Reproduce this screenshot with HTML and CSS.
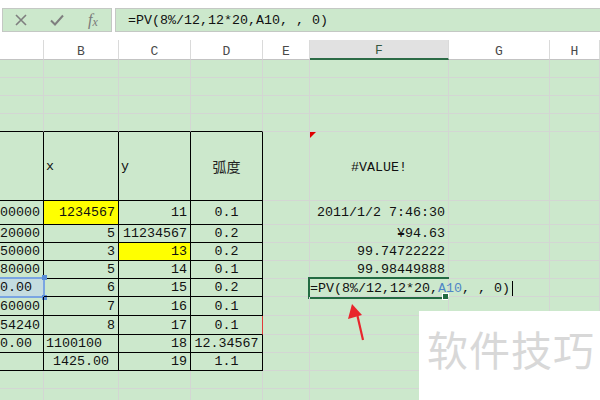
FILE: index.html
```html
<!DOCTYPE html>
<html>
<head>
<meta charset="utf-8">
<link rel="stylesheet" href="styles.css">
</head>
<body>
<div class="fbar">
  <div class="fbtns">
    <span class="ic"><svg width="12" height="12" viewBox="0 0 12 12"><path d="M1 1L11 11M11 1L1 11" stroke="#7f7f7f" stroke-width="1.6" fill="none"/></svg></span>
    <span class="ic"><svg width="14" height="12" viewBox="0 0 14 12"><path d="M1 6.5L5 10.5L13 1.5" stroke="#7f7f7f" stroke-width="2" fill="none"/></svg></span>
    <span class="ic fx"><i>f</i><i class="sx">x</i></span>
  </div>
  <div class="finput">=PV(8%/12,12*20,A10, , 0)</div>
</div>
<div class="sheet">
  <div class="h"></div><div class="h">B</div><div class="h">C</div><div class="h">D</div><div class="h">E</div><div class="h hs">F</div><div class="h">G</div><div class="h">H</div>

  <div class="c"></div><div class="c"></div><div class="c"></div><div class="c"></div><div class="c"></div><div class="c"></div><div class="c"></div><div class="c"></div>
  <div class="c"></div><div class="c"></div><div class="c"></div><div class="c"></div><div class="c"></div><div class="c"></div><div class="c"></div><div class="c"></div>
  <div class="c"></div><div class="c"></div><div class="c"></div><div class="c"></div><div class="c"></div><div class="c"></div><div class="c"></div><div class="c"></div>
  <div class="c tt"></div><div class="c tt"></div><div class="c tt"></div><div class="c tt"></div><div class="c"></div><div class="c"></div><div class="c"></div><div class="c"></div>

  <div class="c t"></div><div class="c t l">x</div><div class="c t l">y</div><div class="c t m cjk">弧度</div><div class="c"></div><div class="c m err">#VALUE!<span class="tri"></span></div><div class="c"></div><div class="c"></div>

  <div class="c t r">00000</div><div class="c t r y">1234567</div><div class="c t r">11</div><div class="c t m">0.1</div><div class="c"></div><div class="c r">2011/1/2 7:46:30</div><div class="c"></div><div class="c"></div>
  <div class="c t r">20000</div><div class="c t r">5</div><div class="c t r">11234567</div><div class="c t m">0.2</div><div class="c"></div><div class="c r">¥94.63</div><div class="c"></div><div class="c"></div>
  <div class="c t r">50000</div><div class="c t r">3</div><div class="c t r y">13</div><div class="c t m">0.2</div><div class="c"></div><div class="c r">99.74722222</div><div class="c"></div><div class="c"></div>
  <div class="c t r">80000</div><div class="c t r">5</div><div class="c t r">14</div><div class="c t m">0.1</div><div class="c"></div><div class="c r">99.98449888</div><div class="c"></div><div class="c"></div>
  <div class="c t r ref pz">0.00<span class="refbox"><span class="sq sq1"></span><span class="sq sq2"></span></span></div><div class="c t r">6</div><div class="c t r">15</div><div class="c t m">0.2</div><div class="c"></div><div class="c edit">=PV(8%/12,12*20,<span class="blue">A10</span>, , 0)<span class="caret"></span><span class="selbox"><span class="handle"></span></span></div><div class="c"></div><div class="c"></div>
  <div class="c t r">60000</div><div class="c t r">7</div><div class="c t r">16</div><div class="c t m">0.1</div><div class="c"></div><div class="c"></div><div class="c"></div><div class="c"></div>
  <div class="c t r">54240</div><div class="c t r">8</div><div class="c t r">17</div><div class="c t m red">0.1</div><div class="c"></div><div class="c"></div><div class="c"></div><div class="c"></div>
  <div class="c t r pz">0.00</div><div class="c t l">1100100</div><div class="c t r">18</div><div class="c t m">12.34567</div><div class="c"></div><div class="c"></div><div class="c"></div><div class="c"></div>
  <div class="c t"></div><div class="c t m">1425.00</div><div class="c t r">19</div><div class="c t m">1.1</div><div class="c"></div><div class="c"></div><div class="c"></div><div class="c"></div>

  <div class="c"></div><div class="c"></div><div class="c"></div><div class="c"></div><div class="c"></div><div class="c"></div><div class="c"></div><div class="c"></div>
  <div class="c"></div><div class="c"></div><div class="c"></div><div class="c"></div><div class="c"></div><div class="c"></div><div class="c"></div><div class="c"></div>
</div>

<svg class="arrow" width="30" height="45" viewBox="340 300 30 45">
  <line x1="357.5" y1="316" x2="363" y2="340" stroke="#e8262c" stroke-width="2.2"/>
  <polygon points="352,304 348,319 362,315" fill="#e8262c"/>
</svg>

<div class="wm">软件技巧</div>
</body>
</html>
```

FILE: styles.css
```css
body {
  margin: 0;
  width: 600px;
  height: 400px;
  overflow: hidden;
  background: #ffffff;
  position: relative;
  font-family: "Liberation Mono", monospace;
  font-size: 13.33px;
  color: #111;
}

.fbar {
  display: flex;
  gap: 3px;
  height: 24px;
  margin: 8px 0 8px 2px;
}

.fbtns {
  width: 110px;
  box-sizing: border-box;
  border: 1px solid #c4c8c4;
  background: #cce8cc;
  display: flex;
}

.ic {
  width: 36px;
  display: flex;
  align-items: center;
  justify-content: center;
}

.fx {
  font-family: "Liberation Serif", serif;
  color: #7a7a7a;
  font-size: 16px;
}
.fx .sx {
  font-size: 12px;
  margin-top: 4px;
}

.finput {
  flex: 1;
  box-sizing: border-box;
  border: 1px solid #c4c8c4;
  border-right: none;
  background: #cce8cc;
  padding-left: 12px;
  display: flex;
  align-items: center;
  padding-top: 1px;
}

.sheet {
  display: grid;
  grid-template-columns: 44px 75px 72px 72px 47px 139px 101px 1fr;
  grid-template-rows: 20px 18px 18px 18px 18px 69px 24px 18px 18px 18px 18px 19px 19px 18px 18px 18px 18px;
  background: #cce8cc;
}

.h {
  background: #fff;
  border-right: 1px solid #dadada;
  border-bottom: 1px solid #c3c3c3;
  display: flex;
  justify-content: center;
  align-items: center;
  padding-top: 3px;
  color: #4a4a4a;
  font-size: 13px;
}
.hs {
  background: #e1e1e1;
  border-bottom: 2px solid #2c6b46;
  color: #34573f;
}

.c {
  border-right: 1px solid #d3d6d3;
  border-bottom: 1px solid #d3d6d3;
  display: flex;
  align-items: center;
  white-space: nowrap;
  position: relative;
  min-width: 0;
}

.tt { border-bottom-color: #000; }
.t { border-right-color: #000; border-bottom-color: #000; }
.red { border-right-color: #e03a3a; }

.r { justify-content: flex-end; padding-right: 3px; }
.l { justify-content: flex-start; padding-left: 2px; }
.m { justify-content: center; }
.y { background: #ffff00; }
.pz { padding-right: 11px; }

.cjk {
  font-family: "Noto Sans CJK SC", sans-serif;
  font-size: 14px;
  color: #222;
}

.err { padding-top: 2px; }
.tri {
  position: absolute;
  left: 0;
  top: 0;
  width: 0;
  height: 0;
  border-top: 6px solid #e00000;
  border-right: 6px solid transparent;
}

.ref { background: #c4dce0; }
.refbox {
  position: absolute;
  left: -3px;
  top: -2px;
  right: -2px;
  bottom: -2px;
  border: 2px solid #7aa5e2;
}
.sq {
  position: absolute;
  width: 5px;
  height: 5px;
  background: #5b8ed8;
  right: -4px;
}
.sq1 { top: -4px; }
.sq2 { bottom: -4px; }

.edit { overflow: visible; padding-top: 1px; }
.blue { color: #4f86c6; }
.caret {
  display: inline-block;
  width: 0;
  height: 15px;
  border-left: 1px solid #000;
  margin-left: 2px;
}
.selbox {
  position: absolute;
  left: -2px;
  top: -2px;
  right: -1px;
  bottom: -3px;
  border: 2px solid #236b42;
  border-right: none;
}
.handle {
  position: absolute;
  right: 0;
  bottom: -3px;
  width: 5px;
  height: 5px;
  background: #236b42;
  border: 1px solid #fff;
}

.arrow {
  position: absolute;
  left: 340px;
  top: 300px;
}

.wm {
  position: absolute;
  left: 419px;
  top: 311px;
  width: 181px;
  height: 89px;
  background: #fff;
  font-family: "Noto Sans CJK SC", sans-serif;
  font-size: 41px;
  color: #d8d8d8;
  box-sizing: border-box;
  padding-left: 8px;
  padding-top: 13px;
  line-height: 1.2;
  letter-spacing: 1px;
}
```
